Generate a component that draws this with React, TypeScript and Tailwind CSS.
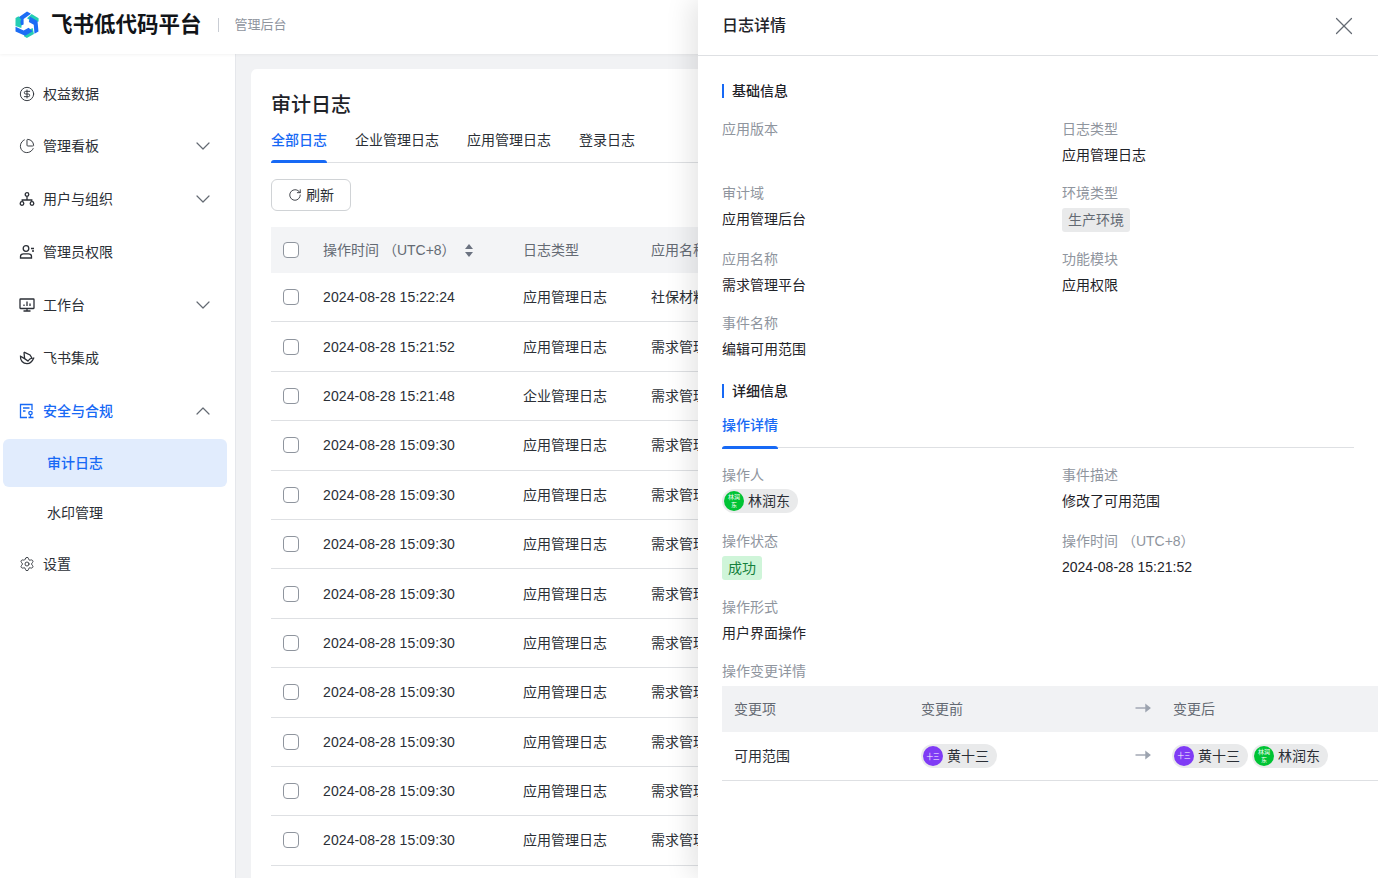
import React from "react";
import { ChevronDown, ChevronUp, CircleDollarSign, ChartPie, Settings, RotateCw, X } from "lucide-react";

const font = "font-['Liberation_Sans','Noto_Sans_CJK_SC',sans-serif]";

const blade = (
  <>
    <path d="M13 0.5L17 2.8L9.6 7.9V13.6L4.4 15.4V6.6Z" fill="#1c6df5" />
    <path d="M17.6 3.1L24.6 7.2V10.6L20.4 11.4C19.6 9.6 17.4 8.4 15 8.6L13 7.2Z" fill="#25cdb4" />
  </>
);

const Logo = () => (
  <svg width="26" height="28" viewBox="0 0 26 28">
    <g>{blade}</g>
    <g transform="rotate(120 13 13.75)">{blade}</g>
    <g transform="rotate(240 13 13.75)">{blade}</g>
  </svg>
);

const iconProps = { width: 16, height: 16, viewBox: "0 0 16 16", fill: "none", stroke: "currentColor", strokeWidth: 1.3 };

const OrgIcon = () => (
  <svg {...iconProps}>
    <circle cx="8" cy="3.5" r="1.8" />
    <circle cx="3" cy="12.5" r="1.8" />
    <circle cx="13" cy="12.5" r="1.8" />
    <path d="M8 5.5V9M3.2 10.5V9H12.8V10.5" />
  </svg>
);

const AdminIcon = () => (
  <svg {...iconProps}>
    <circle cx="7" cy="4.5" r="2.8" />
    <path d="M1.5 14V12.5C1.5 10.8 3 9.8 4.5 9.8H9.5C11 9.8 12.5 10.8 12.5 12.5V14H1.5Z" />
    <path d="M12 4.5H15M13 7H15" />
  </svg>
);

const DeskIcon = () => (
  <svg {...iconProps}>
    <rect x="1" y="2" width="14" height="9.5" rx="0.5" />
    <path d="M8 11.5V14M4.5 14H11.5M5 9V7.5M8 9V4.5M11 9V6.5" />
  </svg>
);

const LarkIcon = () => (
  <svg {...iconProps}>
    <path d="M5 2.2L11 5L13 8.2C11.4 8.4 10 9.5 9 11L5.6 8.6L1.5 6.2C1 10.4 4 13.6 8 13.6C11.5 13.6 13.5 11 15 7.4" />
    <path d="M5 2.2L5.6 8.6" />
  </svg>
);

const ShieldDocIcon = () => (
  <svg {...iconProps} stroke="#1769f5" strokeWidth={1.3}>
    <path d="M8 14.5H1.5V1.5H13V7" />
    <path d="M4 5H10.5M4 8H6.5" />
    <circle cx="11.5" cy="10" r="1.7" />
    <path d="M9.5 14.5H14.5M11.5 12V14.5" />
  </svg>
);

const SortIcon = () => (
  <svg width="8" height="13" viewBox="0 0 8 13" fill="#6b7280" className="block">
    <path d="M4 0L8 5H0Z" />
    <path d="M4 13L8 8H0Z" />
  </svg>
);

const Arrow = () => (
  <svg width="16" height="10" viewBox="0 0 16 10" fill="none" stroke="#9ca3af" strokeWidth="1.4" className="-mt-[2px] block">
    <path d="M0.5 5H14" />
    <path d="M11 2L14.8 5L11 8Z" fill="#9ca3af" />
  </svg>
);

const nav = [
  { label: "权益数据", icon: <CircleDollarSign size={18} strokeWidth={1.4} /> },
  { label: "管理看板", icon: <ChartPie size={18} strokeWidth={1.4} />, chevron: true },
  { label: "用户与组织", icon: <OrgIcon />, chevron: true },
  { label: "管理员权限", icon: <AdminIcon /> },
  { label: "工作台", icon: <DeskIcon />, chevron: true },
  { label: "飞书集成", icon: <LarkIcon /> },
];

const rows = [
  ["2024-08-28 15:22:24", "应用管理日志", "社保材料"],
  ["2024-08-28 15:21:52", "应用管理日志", "需求管理"],
  ["2024-08-28 15:21:48", "企业管理日志", "需求管理"],
  ...Array.from({ length: 9 }, () => ["2024-08-28 15:09:30", "应用管理日志", "需求管理"]),
];

const Checkbox = () => <span className="block h-4 w-4 rounded-[4px] border border-[#8f959e] bg-white" />;

const NavRow = ({ label, icon, chevron }: { label: string; icon: React.ReactNode; chevron?: boolean }) => (
  <div className="flex h-[52.8px] items-center pl-[19px] pr-[20px] text-sm text-[#2b2f36]">
    <span className="mr-2 flex w-4 justify-center text-[#2b2f36]">{icon}</span>
    <span className="flex-1">{label}</span>
    {chevron && <ChevronDown size={24} strokeWidth={1.2} className="text-[#646a73]" />}
  </div>
);

const Field = ({ label, tall, children }: { label: string; tall?: boolean; children?: React.ReactNode }) => (
  <div className={tall ? "h-[66px]" : "h-[64px]"}>
    <div className="h-[26px] text-sm leading-[26px] text-[#8f959e]">{label}</div>
    <div className="flex h-[26px] items-center text-sm text-[#1f2329]">{children}</div>
  </div>
);

const SectionTitle = ({ children }: { children: React.ReactNode }) => (
  <div className="flex h-[14px] items-center border-l-2 border-[#1769f5] pl-2 text-sm font-medium text-[#1f2329]">{children}</div>
);

const Person = ({ name, short, color, small }: { name: string; short: string; color: string; small?: boolean }) => (
  <span className="inline-flex h-6 items-center rounded-full bg-[#e9eaeb] pl-[2px] pr-2 text-sm text-[#2b2f36]">
    <span
      className={`mr-1 flex h-5 w-5 items-center justify-center rounded-full text-center text-white ${color} ${small ? "text-[6px] leading-[8px] px-[4px]" : "text-[6.5px]"}`}
    >
      {short}
    </span>
    {name}
  </span>
);

export default function App() {
  return (
    <div className={`relative h-[878px] w-[1378px] overflow-hidden bg-white ${font}`}>
      <header className="relative z-10 flex h-[54px] items-center bg-white pb-1 pl-[14px] shadow-[0_1px_3px_rgba(0,0,0,0.05)]">
        <Logo />
        <span className="ml-[11px] text-[21.5px] font-bold text-[#111418]">飞书低代码平台</span>
        <span className="ml-4 h-[14px] w-px bg-[#c9cdd4]" />
        <span className="ml-4 text-[13px] text-[#8f959e]">管理后台</span>
      </header>

      <div className="flex h-[824px]">
        <aside className="w-[236px] shrink-0 border-r border-[#e5e7eb] bg-white pt-[13.2px]">
          {nav.map((n) => (
            <NavRow key={n.label} {...n} />
          ))}
          <div className="mt-[0.6px] flex h-[52.8px] items-center pl-[19px] pr-[20px] text-sm font-medium text-[#1769f5]">
            <span className="mr-2 flex w-4 justify-center">
              <ShieldDocIcon />
            </span>
            <span className="flex-1">安全与合规</span>
            <ChevronUp size={24} strokeWidth={1.2} className="text-[#646a73]" />
          </div>
          <div className="ml-[3px] mt-[1.3px] flex h-12 w-[224px] items-center rounded-md bg-[#e1ecfd] pl-[44px] text-sm font-medium text-[#1769f5]">
            审计日志
          </div>
          <div className="mb-[1px] mt-[2px] flex h-12 items-center pl-[47px] text-sm text-[#2b2f36]">水印管理</div>
          <NavRow label="设置" icon={<Settings size={18} strokeWidth={1.3} />} />
        </aside>

        <main className="min-w-0 flex-1 bg-[#f1f2f4] pl-[15px] pt-[15px]">
          <div className="h-[900px] w-[1100px] rounded-t-md bg-white pl-[20px] pt-[22px]">
            <h1 className="text-[20px] font-medium leading-7 text-[#1f2329]">审计日志</h1>
            <div className="mt-[11px] flex h-[33px] w-[900px] gap-7 border-b border-[#dee0e3] text-sm text-[#2b2f36]">
              <span className="relative font-medium text-[#1769f5]">
                全部日志
                <span className="absolute -bottom-px left-0 h-[3px] w-full rounded-t-sm bg-[#1769f5]" />
              </span>
              <span>企业管理日志</span>
              <span>应用管理日志</span>
              <span>登录日志</span>
            </div>
            <button className="mt-4 flex h-8 w-20 items-center justify-center gap-1 rounded-md border border-[#d0d3d6] bg-white text-sm text-[#2b2f36]">
              <RotateCw size={14} strokeWidth={1.5} />
              刷新
            </button>
            <div className="mt-4 w-[900px]">
              <div className="flex h-[46px] items-center bg-[#f3f4f6] text-sm text-[#646a73]">
                <span className="ml-3 w-10">
                  <Checkbox />
                </span>
                <span className="flex w-[200px] items-center">
                  操作时间 （UTC+8）
                  <span className="ml-[9px]">
                    <SortIcon />
                  </span>
                </span>
                <span className="w-[128px]">日志类型</span>
                <span>应用名称</span>
              </div>
              {rows.map((r, i) => (
                <div key={i} className="flex h-[49.4px] items-center border-b border-[#dee0e3] text-sm text-[#2b2f36]">
                  <span className="ml-3 w-10">
                    <Checkbox />
                  </span>
                  <span className="w-[200px] tracking-[0.1px]">{r[0]}</span>
                  <span className="w-[128px]">{r[1]}</span>
                  <span>{r[2]}</span>
                </div>
              ))}
            </div>
          </div>
        </main>
      </div>

      <section className="absolute inset-y-0 right-0 z-20 w-[680px] bg-white shadow-[-8px_0_24px_rgba(0,0,0,0.1)]">
        <div className="flex h-[56px] items-center justify-between border-b border-[#dee0e3] pb-1 pl-[24px] pr-[19px]">
          <span className="text-base font-medium text-[#1f2329]">日志详情</span>
          <X size={30} strokeWidth={0.95} className="text-[#646a73]" />
        </div>
        <div className="pl-[24px] pt-[28px]">
          <SectionTitle>基础信息</SectionTitle>
          <div className="mt-[18px] grid grid-cols-[340px_1fr]">
            <Field label="应用版本" />
            <Field label="日志类型">应用管理日志</Field>
            <Field label="审计域" tall>应用管理后台</Field>
            <Field label="环境类型" tall>
              <span className="mt-px rounded-[3px] bg-[#e9eaeb] px-[6px] leading-6 text-[#646a73]">生产环境</span>
            </Field>
            <Field label="应用名称">需求管理平台</Field>
            <Field label="功能模块">应用权限</Field>
            <Field label="事件名称">编辑可用范围</Field>
          </div>
          <div className="mt-[10px]">
            <SectionTitle>详细信息</SectionTitle>
          </div>
          <div className="mt-[15px] h-[35px] w-[632px] border-b border-[#dee0e3] text-sm font-medium leading-[24px] text-[#1769f5]">
            <span className="relative inline-block h-[35px] w-14">
              操作详情
              <span className="absolute -bottom-px left-0 h-[3px] w-full rounded-t-sm bg-[#1769f5]" />
            </span>
          </div>
          <div className="mt-[14px] grid grid-cols-[340px_1fr]">
            <Field label="操作人" tall>
              <Person name="林润东" short="林润东" color="bg-[#00c334]" small />
            </Field>
            <Field label="事件描述" tall>修改了可用范围</Field>
            <Field label="操作状态" tall>
              <span className="mt-px rounded-[3px] bg-[#cff5d9] px-[6px] leading-6 text-[#14803c]">成功</span>
            </Field>
            <Field label="操作时间 （UTC+8）" tall>2024-08-28 15:21:52</Field>
            <Field label="操作形式">用户界面操作</Field>
          </div>
          <div className="h-[26px] text-sm leading-[26px] text-[#8f959e]">操作变更详情</div>
          <div className="mt-[2px] flex h-[46px] items-center bg-[#f1f2f4] text-sm text-[#646a73]">
            <span className="w-[199px] pl-3">变更项</span>
            <span className="w-[214px]">变更前</span>
            <span className="w-[38px]">
              <Arrow />
            </span>
            <span>变更后</span>
          </div>
          <div className="flex h-[49px] items-center border-b border-[#dee0e3] text-sm text-[#2b2f36]">
            <span className="w-[199px] pl-3">可用范围</span>
            <span className="w-[214px]">
              <Person name="黄十三" short="十三" color="bg-[#7f3bf5]" />
            </span>
            <span className="w-[38px]">
              <Arrow />
            </span>
            <span className="-ml-px flex gap-1">
              <Person name="黄十三" short="十三" color="bg-[#7f3bf5]" />
              <Person name="林润东" short="林润东" color="bg-[#00c334]" small />
            </span>
          </div>
        </div>
      </section>
    </div>
  );
}
